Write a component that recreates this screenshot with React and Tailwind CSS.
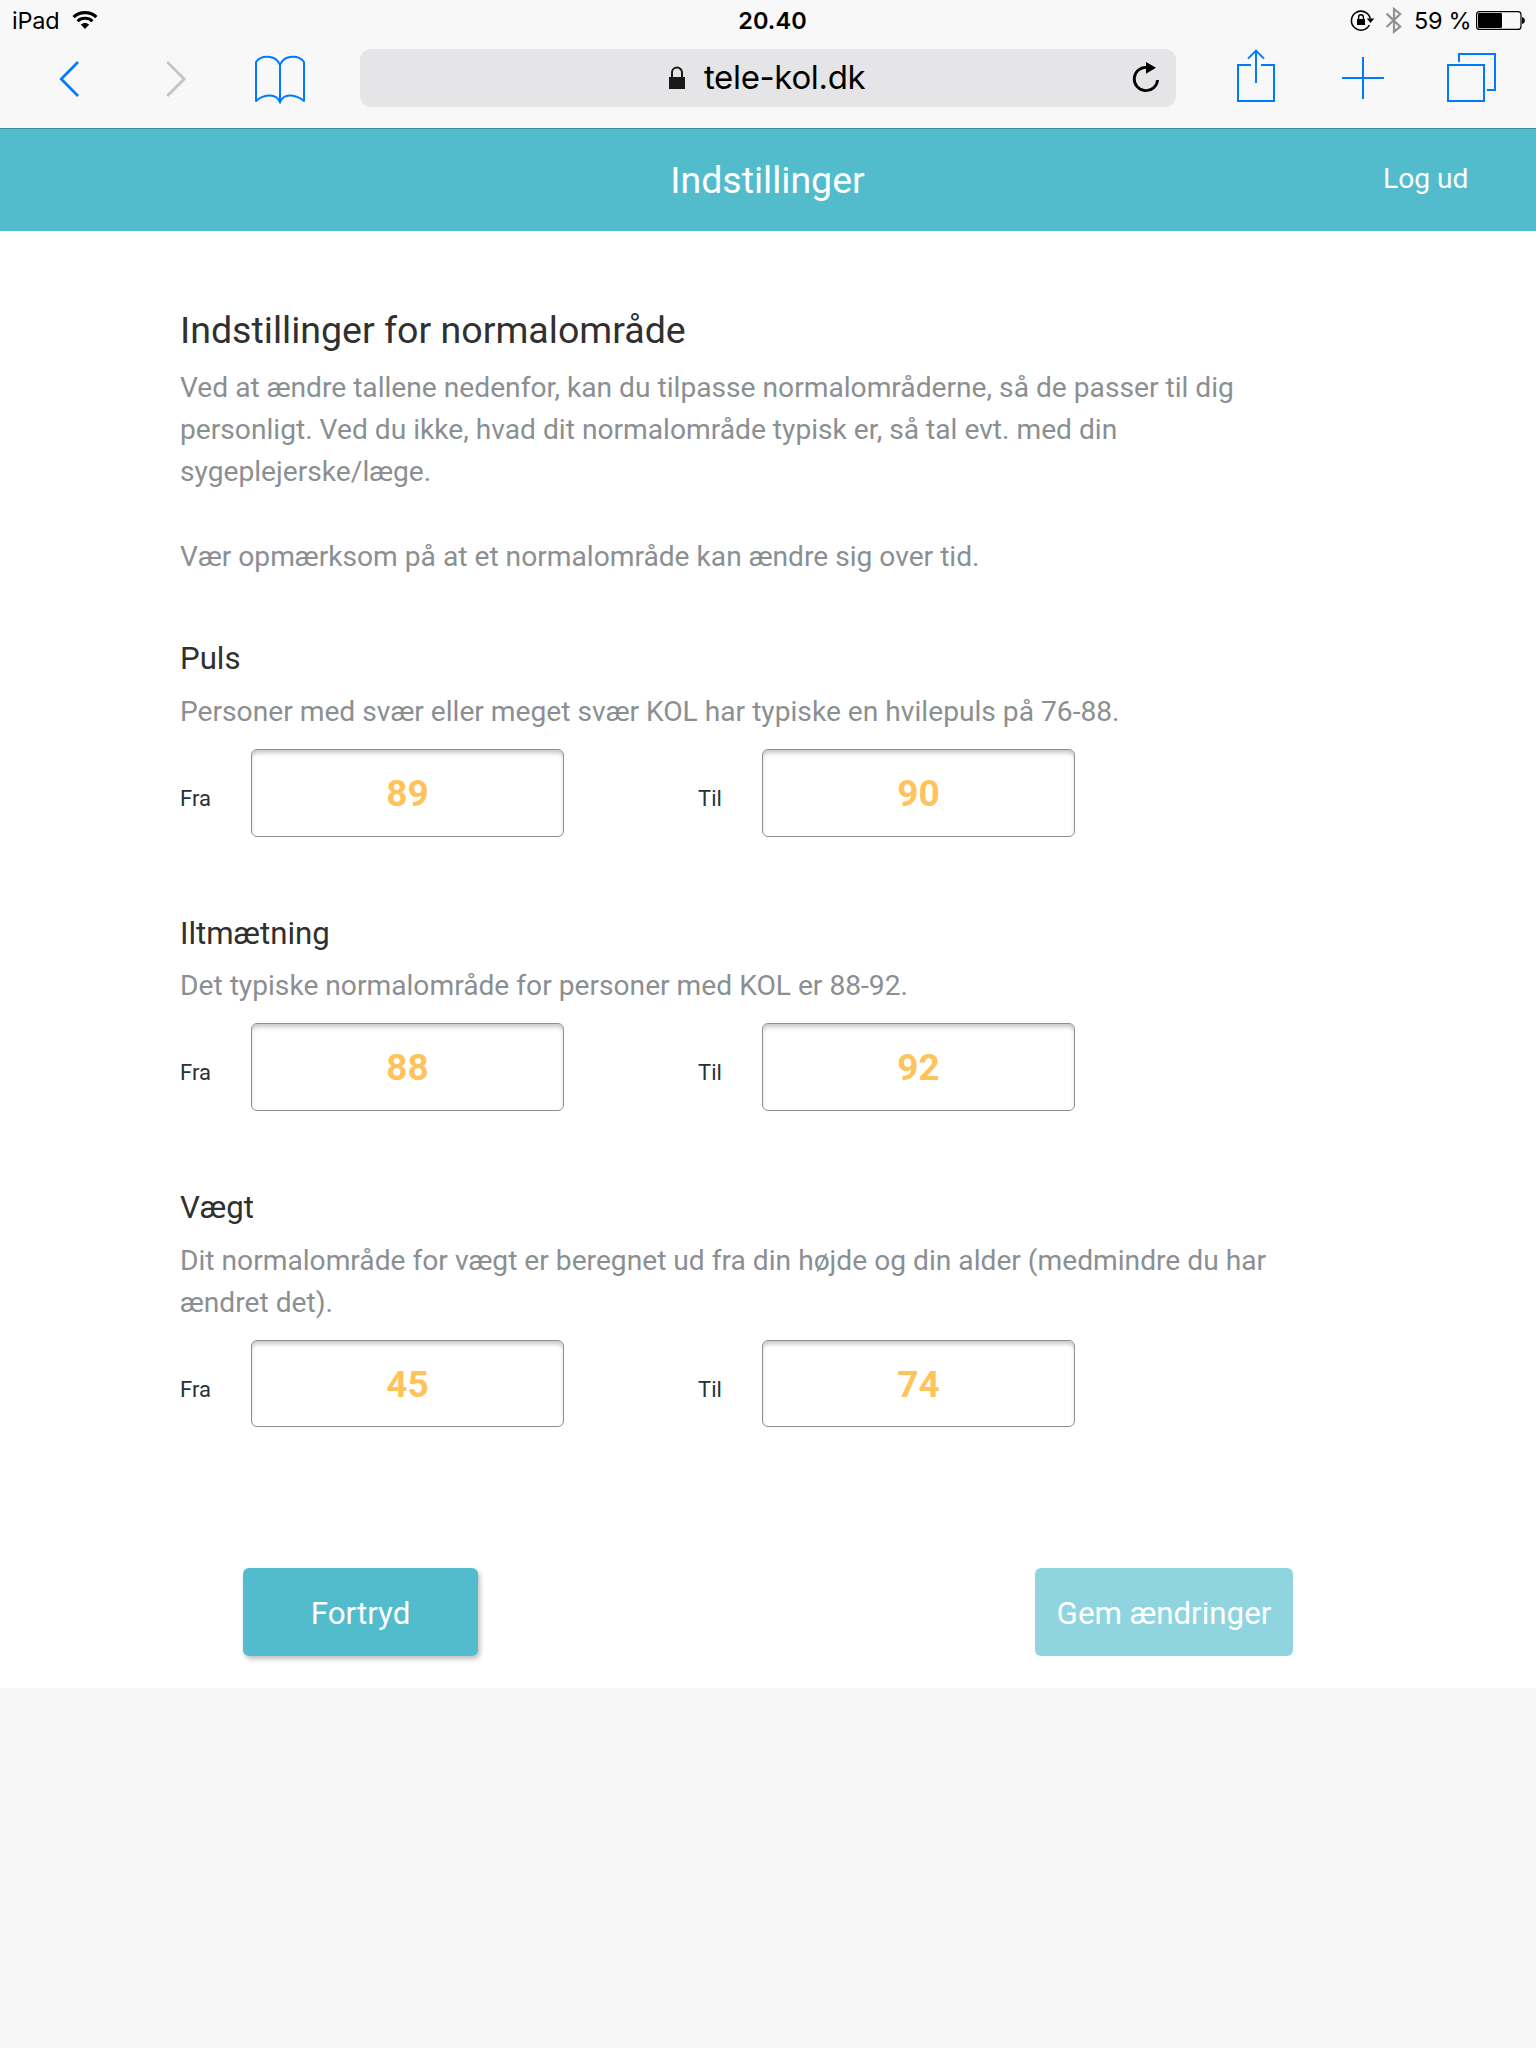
const sections = [
  {
    title: "Puls",
    lines: ["Personer med svær eller meget svær KOL har typiske en hvilepuls på 76-88."],
    from: "89",
    to: "90",
  },
  {
    title: "Iltmætning",
    lines: ["Det typiske normalområde for personer med KOL er 88-92."],
    from: "88",
    to: "92",
  },
  {
    title: "Vægt",
    lines: [
      "Dit normalområde for vægt er beregnet ud fra din højde og din alder (medmindre du har",
      "ændret det).",
    ],
    from: "45",
    to: "74",
  },
];

function StatusBar() {
  return (
    <div className="flex h-10 items-start justify-between pl-3 pr-[11px] text-[23.5px] leading-[42px] text-black">
      <div className="flex w-[300px]">
        <span className="w-[59px] whitespace-nowrap tracking-[-0.2px]">iPad</span>
        <svg className="h-10 w-[28px]" viewBox="71 0 28 40" fill="none" stroke="#000">
          <path d="M73.6 17.2 C79.5 11.2 90.5 11.2 96.4 17.2" strokeWidth="3.2" />
          <path d="M77.6 21.2 C81.5 17.4 88.5 17.4 92.4 21.2" strokeWidth="3" />
          <path d="M80.8 24.6 C83.2 22.4 86.8 22.4 89.2 24.6 L85 29 Z" fill="#000" stroke="none" />
        </svg>
      </div>
      <span className="pl-[8px] font-semibold tracking-[0.1px]">20.40</span>
      <div className="flex w-[300px] justify-end">
        <svg className="h-10 w-[28px]" viewBox="1349 0 28 40" fill="none" stroke="#000">
          <path d="M1369.4 25 A9.5 9.5 0 1 1 1370.2 18.5" strokeWidth="1.6" />
          <path d="M1366.8 18.6 H1374.2 L1370.5 23 Z" fill="#000" stroke="none" />
          <rect x="1357" y="19" width="8" height="6" fill="#000" stroke="none" />
          <path d="M1358.6 19.5 V17.2 A2.4 2.4 0 0 1 1363.4 17.2 V19.5" strokeWidth="1.4" />
        </svg>
        <svg className="ml-[7px] h-10 w-[20px]" viewBox="1384 0 20 40" fill="none" stroke="#929292" strokeWidth="2.2">
          <path d="M1386.6 13.6 L1400.2 26.6 L1394 31.6 V9 L1400.2 14 L1386.6 27" />
        </svg>
        <span className="ml-[10px] w-[58px] whitespace-nowrap tracking-[-0.3px]">59 %</span>
        <svg className="ml-[2px] h-10 w-[51px]" viewBox="1474 0 51 40" fill="none">
          <rect x="1476.6" y="11.6" width="44.4" height="17.8" rx="3" stroke="#000" strokeWidth="1.2" />
          <rect x="1478" y="13" width="24" height="15" rx="1.2" fill="#000" />
          <path d="M1522 17 C1525.8 17.6 1525.8 23.4 1522 24 Z" fill="#000" />
        </svg>
      </div>
    </div>
  );
}

function Toolbar() {
  return (
    <div className="flex h-[88px] pt-2">
      <svg className="ml-[50px] h-[60px] w-10 shrink-0" viewBox="50 48 40 60" fill="none" stroke="#007aff" strokeWidth="2.7">
        <path d="M78 62 L61.2 79 L78 96" />
      </svg>
      <svg className="ml-[68px] h-[60px] w-10 shrink-0" viewBox="158 48 40 60" fill="none" stroke="#c4c4c5" strokeWidth="2.7">
        <path d="M167.2 62 L184.2 79 L167.2 96" />
      </svg>
      <svg className="ml-[52px] h-[60px] w-[60px] shrink-0" viewBox="250 48 60 60" fill="none" stroke="#007aff" strokeWidth="2" strokeLinejoin="round">
        <path d="M280 65 C276 54.5 261 54.5 256 62 V101 C262 95.5 276 91.5 280 102.5 C284 91.5 297 95.5 304 101 V62 C299 54.5 284 54.5 280 65 Z M280 64 V103.5" />
      </svg>
      <div className="ml-[50px] mt-px flex h-[58px] w-[816px] shrink-0 rounded-[11px] bg-[#e5e5e7]">
        <svg className="ml-[304px] h-[58px] w-[26px]" viewBox="664 49 26 58" fill="none">
          <rect x="669" y="77" width="16" height="12" fill="#1a1a1a" />
          <path d="M672 77.5 V72.6 A5 5 0 0 1 682 72.6 V77.5" stroke="#1a1a1a" strokeWidth="2" />
        </svg>
        <span className="ml-[14px] w-[179px] whitespace-nowrap text-[33px] leading-[56px] tracking-[-0.35px] text-black">tele-kol.dk</span>
        <svg className="ml-[243px] h-[58px] w-[40px]" viewBox="1126 49 40 58" fill="none">
          <path d="M1146.5 67.3 A11.7 11.7 0 1 0 1157.6 80" stroke="#000" strokeWidth="2.8" />
          <path d="M1146 62 L1156 67.8 L1146 73.8 Z" fill="#000" />
        </svg>
      </div>
      <svg className="ml-[54px] h-[60px] w-[50px] shrink-0" viewBox="1230 48 50 60" fill="none" stroke="#007aff" strokeWidth="2">
        <path d="M1251 65 H1238 V101 H1274 V65 H1261 M1256 83 V51 M1248 58.6 L1256 50.6 L1264 58.6" />
      </svg>
      <svg className="ml-[58px] h-[60px] w-[50px] shrink-0" viewBox="1338 48 50 60" fill="none" stroke="#007aff" strokeWidth="2">
        <path d="M1342 78 H1384 M1363 57 V99" />
      </svg>
      <svg className="ml-[56px] h-[60px] w-[56px] shrink-0" viewBox="1444 48 56 60" fill="none" stroke="#007aff" strokeWidth="2">
        <path d="M1448 65 H1484 V101 H1448 Z M1459 62 V54 H1495 V90 H1487" />
      </svg>
    </div>
  );
}

function NumberBox({ value }) {
  return (
    <div className="h-[87.5px] w-[313px] rounded-[6px] border border-[#8f8f8f] bg-white text-center text-[37px] font-bold leading-[87px] text-[#ffc35c] shadow-[inset_0_4px_4px_-1px_rgba(0,0,0,0.22)]">
      {value}
    </div>
  );
}

function Section({ title, lines, from, to }) {
  return (
    <section className="mb-[75.5px]">
      <h2 className="text-[31.2px] leading-[42px] text-[#303030]">{title}</h2>
      <p className="mt-[10.9px] whitespace-nowrap text-[28.18px] leading-[42.25px] text-[#8b8f92]">
        {lines.map((line) => (
          <span key={line} className="block">{line}</span>
        ))}
      </p>
      <div className="mt-[15.7px] flex h-[88px] text-[22px] leading-[99px] text-[#263238]">
        <span className="w-[71px]">Fra</span>
        <NumberBox value={from} />
        <span className="ml-[134px] w-[64px]">Til</span>
        <NumberBox value={to} />
      </div>
    </section>
  );
}

export default function App() {
  return (
    <div className="min-h-[2048px] w-[1536px] overflow-hidden bg-[#f7f7f7] font-['Roboto',sans-serif]">
      <div className="h-[128px] bg-[#f8f8f8] font-['Inter',sans-serif]">
        <StatusBar />
        <Toolbar />
      </div>
      <header className="grid h-[103px] grid-cols-3 border-t border-[#3f8c9a] bg-[#52bccd] text-white">
        <span className="col-start-2 pr-px text-center text-[37.5px] leading-[103px]">Indstillinger</span>
        <span className="pr-[67.5px] text-right text-[28.16px] leading-[100px]">Log ud</span>
      </header>
      <main className="bg-white px-[180px] pb-[32px] pt-[74px]">
        <h1 className="whitespace-nowrap text-[37.55px] leading-[51px] text-[#303030]">Indstillinger for normalområde</h1>
        <p className="mb-[60.3px] mt-[10.7px] whitespace-nowrap text-[28.18px] leading-[42.25px] text-[#8b8f92]">
          Ved at ændre tallene nedenfor, kan du tilpasse normalområderne, så de passer til dig
          <br />
          personligt. Ved du ikke, hvad dit normalområde typisk er, så tal evt. med din
          <br />
          sygeplejerske/læge.
          <br />
          <br />
          Vær opmærksom på at et normalområde kan ændre sig over tid.
        </p>
        {sections.map((section) => (
          <Section key={section.title} {...section} />
        ))}
        <div className="-mt-[10.5px] flex justify-between px-[63px] pt-[75px] text-[31.3px] leading-[90px] text-white">
          <button className="h-[88px] w-[235px] rounded-[6px] bg-[#52bccd] pt-px shadow-[2px_3px_5px_rgba(0,0,0,0.26)]">Fortryd</button>
          <button className="h-[88px] w-[258px] rounded-[6px] bg-[#8fd4de] pt-px">Gem ændringer</button>
        </div>
      </main>
    </div>
  );
}
